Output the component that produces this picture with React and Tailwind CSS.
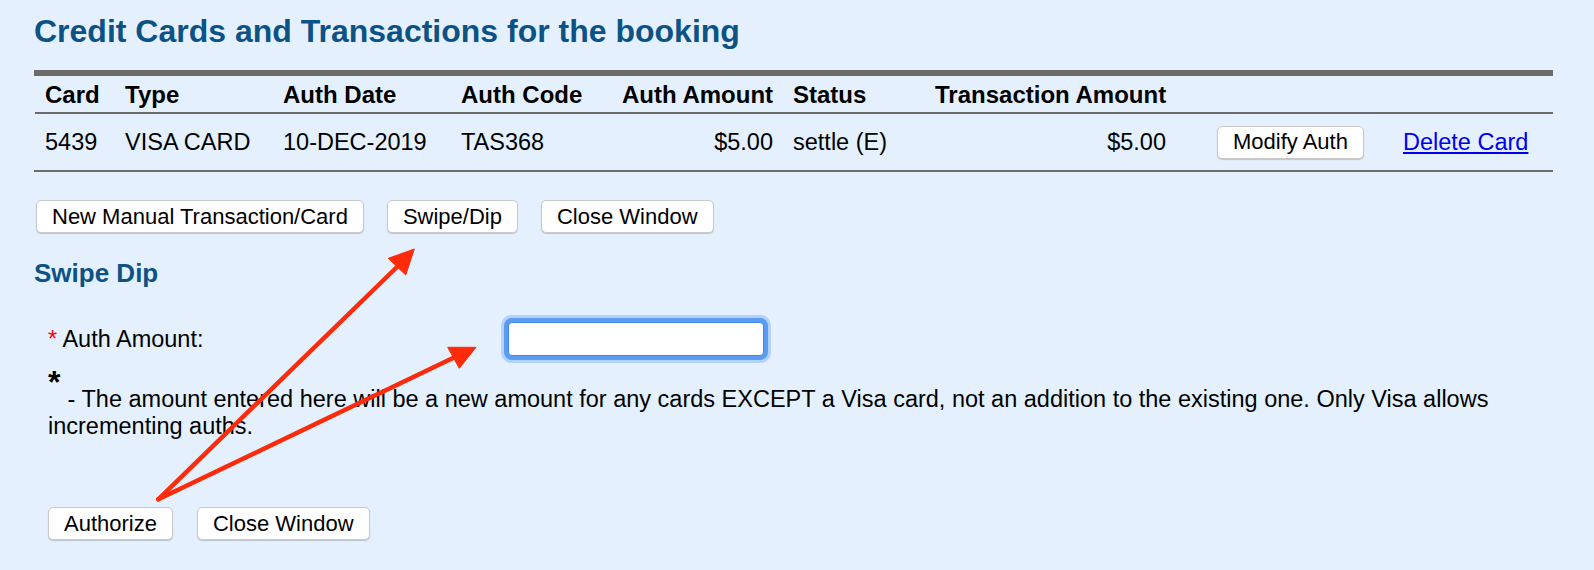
import React from 'react';

const btn =
  'h-[33px] rounded-[5px] border border-[#c9c9c9] bg-white px-[15px] text-[22px] leading-none text-black shadow-[0_1px_1px_rgba(0,0,0,0.18)]';

function Arrows() {
  return (
    <svg
      className="pointer-events-none absolute inset-0"
      width="1594"
      height="570"
      viewBox="0 0 1594 570"
    >
      <g fill="#fe2b0a" stroke="#fe2b0a">
        <line x1="158.3" y1="499.3" x2="398" y2="266" strokeWidth="4.5" strokeLinecap="round" />
        <polygon points="414.3,249 388.3,258.3 405.7,275" strokeWidth="1" strokeLinejoin="round" />
        <line x1="158.3" y1="499.3" x2="454" y2="357.5" strokeWidth="4.5" strokeLinecap="round" />
        <polygon points="476,347.3 447.7,347.3 459.3,368.3" strokeWidth="1" strokeLinejoin="round" />
      </g>
    </svg>
  );
}

export default function App() {
  return (
    <div className="relative min-h-[570px] w-full overflow-hidden bg-[#e4f0fe] font-['Liberation_Sans',Arial,sans-serif] text-black">
      <div className="pl-[34px] pr-[41px]">
        <h1 className="mt-[13px] text-[32px] font-bold leading-[36px] text-[#0c5285]">
          Credit Cards and Transactions for the booking
        </h1>

        <div className="mt-[21px] border-t-[6px] border-b-2 border-[#6b6b6b] pl-px text-[23.5px]">
          <div className="grid h-[38px] grid-cols-[80px_158px_178px_161px_171px_142px_251px_217px_1fr] items-center border-b-2 border-[#6b6b6b] text-[24px] font-bold leading-[27px]">
            <div className="px-[10px]">Card</div>
            <div className="px-[10px]">Type</div>
            <div className="px-[10px]">Auth Date</div>
            <div className="px-[10px]">Auth Code</div>
            <div className="px-[10px] text-right whitespace-nowrap">Auth Amount</div>
            <div className="px-[10px]">Status</div>
            <div className="px-[10px] text-right whitespace-nowrap">Transaction Amount</div>
            <div />
            <div />
          </div>
          <div className="grid h-[56px] grid-cols-[80px_158px_178px_161px_171px_142px_251px_217px_1fr] items-center leading-[27px]">
            <div className="px-[10px]">5439</div>
            <div className="px-[10px] whitespace-nowrap">VISA CARD</div>
            <div className="px-[10px]">10-DEC-2019</div>
            <div className="px-[10px]">TAS368</div>
            <div className="px-[10px] text-right">$5.00</div>
            <div className="px-[10px] whitespace-nowrap">settle (E)</div>
            <div className="px-[10px] text-right">$5.00</div>
            <div className="pl-[41px]">
              <button className={btn}>Modify Auth</button>
            </div>
            <div className="px-[10px]">
              <a href="#" className="whitespace-nowrap text-[#0000ee] underline">
                Delete Card
              </a>
            </div>
          </div>
        </div>

        <div className="ml-[2px] mt-[28px] flex gap-[23px]">
          <button className={btn}>New Manual Transaction/Card</button>
          <button className={btn}>Swipe/Dip</button>
          <button className={btn}>Close Window</button>
        </div>

        <h2 className="mt-[25px] text-[26px] font-bold leading-[30px] text-[#0c5285]">Swipe Dip</h2>
      </div>

      <div className="pl-[48px] pr-[20px] text-[23.5px] leading-[27px]">
        <div className="mt-[34px] flex h-[34px] items-center">
          <div className="w-[460px]">
            <span className="text-[#ff0000]">*</span> Auth Amount:
          </div>
          <input
            type="text"
            className="h-[34px] w-[256px] rounded-[4px] border border-[#3f86e6] bg-white shadow-[0_0_0_4px_#5b9cf2,0_0_0_7px_#b2d2fb] outline-none"
          />
        </div>

        <div className="mt-[10px] h-[32px] -mb-[12px] text-[32px] font-bold leading-[32px]">*</div>
        <p>
          {'\u00a0\u00a0 - The amount entered here will be a new amount for any cards EXCEPT a Visa card, not an addition to the existing one. Only Visa allows incrementing auths.'}
        </p>

        <div className="mt-[67px] flex gap-[24px]">
          <button className={btn}>Authorize</button>
          <button className={btn}>Close Window</button>
        </div>
      </div>

      <Arrows />
    </div>
  );
}
